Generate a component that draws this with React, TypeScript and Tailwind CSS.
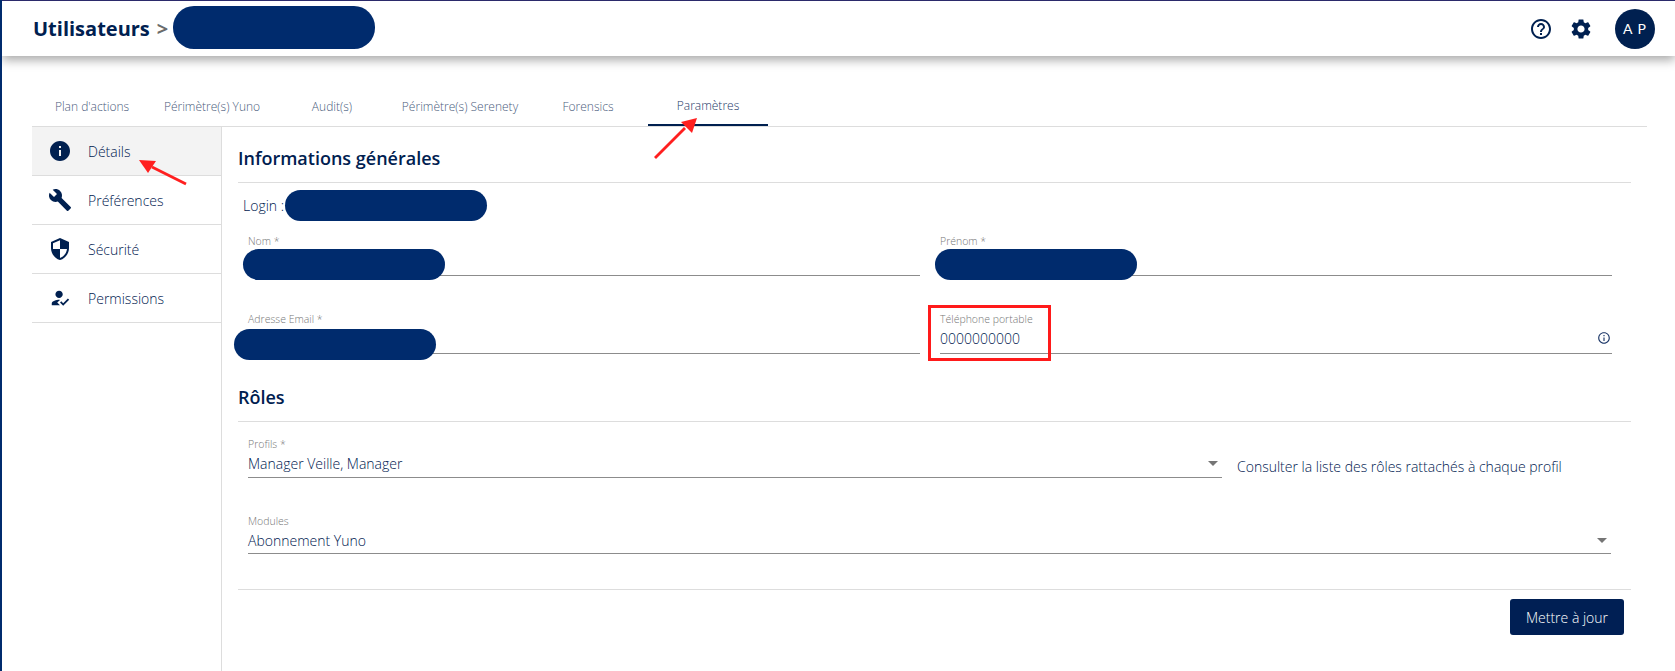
import React from "react";

function Mat({ d, className }: { d: string; className?: string }) {
  return (
    <svg viewBox="0 0 24 24" fill="currentColor" className={className}>
      <path d={d} />
    </svg>
  );
}

const icons = {
  info: "M12 2C6.48 2 2 6.48 2 12s4.48 10 10 10 10-4.48 10-10S17.52 2 12 2zm1 15h-2v-6h2v6zm0-8h-2V7h2v2z",
  build:
    "M22.7 19l-9.1-9.1c.9-2.3.4-5-1.5-6.9-2-2-5-2.4-7.4-1.3L9 6 6 9 1.6 4.7C.4 7.1.9 10.1 2.9 12.1c1.9 1.9 4.6 2.4 6.9 1.5l9.1 9.1c.4.4 1 .4 1.4 0l2.3-2.3c.5-.4.5-1.1.1-1.4z",
  security:
    "M12 1L3 5v6c0 5.55 3.84 10.74 9 12 5.16-1.26 9-6.45 9-12V5l-9-4zm0 10.99h7c-.53 4.12-3.28 7.79-7 8.94V12H5V6.3l7-3.11v8.8z",
  howTo:
    "M9 17l3-2.94c-.39-.04-.68-.06-1-.06-2.67 0-8 1.34-8 4v2h9l-3-3zm2-5c2.21 0 4-1.79 4-4s-1.79-4-4-4-4 1.79-4 4 1.79 4 4 4m4.47 8.5L12 17l1.4-1.41 2.07 2.08 5.13-5.17 1.4 1.41z",
  help:
    "M11 18h2v-2h-2v2zm1-16C6.48 2 2 6.48 2 12s4.48 10 10 10 10-4.48 10-10S17.52 2 12 2zm0 18c-4.41 0-8-3.59-8-8s3.59-8 8-8 8 3.59 8 8-3.59 8-8 8zm0-14c-2.21 0-4 1.79-4 4h2c0-1.1.9-2 2-2s2 .9 2 2c0 2-3 1.75-3 5h2c0-2.25 3-2.5 3-5 0-2.21-1.79-4-4-4z",
  gear:
    "M19.14 12.94c.04-.3.06-.61.06-.94 0-.32-.02-.64-.07-.94l2.03-1.58c.18-.14.23-.41.12-.61l-1.92-3.32c-.12-.22-.37-.29-.59-.22l-2.39.96c-.5-.38-1.03-.7-1.62-.94l-.36-2.54c-.04-.24-.24-.41-.48-.41h-3.84c-.24 0-.43.17-.47.41l-.36 2.54c-.59.24-1.13.57-1.62.94l-2.39-.96c-.22-.08-.47 0-.59.22L2.74 8.87c-.12.21-.08.47.12.61l2.03 1.58c-.05.3-.09.63-.09.94s.02.64.07.94l-2.03 1.58c-.18.14-.23.41-.12.61l1.92 3.32c.12.22.37.29.59.22l2.39-.96c.5.38 1.03.7 1.62.94l.36 2.54c.05.24.24.41.48.41h3.84c.24 0 .44-.17.47-.41l.36-2.54c.59-.24 1.13-.56 1.62-.94l2.39.96c.22.08.47 0 .59-.22l1.92-3.32c.12-.22.07-.47-.12-.61l-2.01-1.58zM12 15.6c-1.98 0-3.6-1.62-3.6-3.6s1.62-3.6 3.6-3.6 3.6 1.62 3.6 3.6-1.62 3.6-3.6 3.6z",
};

const tabs = [
  { label: "Plan d'actions", cls: "w-[120px]" },
  { label: "Périmètre(s) Yuno", cls: "w-[120px]" },
  { label: "Audit(s)", cls: "w-[120px]" },
  { label: "Périmètre(s) Serenety", cls: "w-[136px]" },
  { label: "Forensics", cls: "w-[120px]" },
];

const menu = [
  { label: "Détails", icon: icons.info, active: true, size: "w-[24px] h-[24px]" },
  { label: "Préférences", icon: icons.build, active: false, size: "w-[24px] h-[24px]" },
  { label: "Sécurité", icon: icons.security, active: false, size: "w-[24px] h-[24px]" },
  { label: "Permissions", icon: icons.howTo, active: false, size: "w-[22px] h-[22px]" },
];

// masked value, painted over the field like in the screenshot
function Pill({ className }: { className: string }) {
  return <div className={`absolute w-[202px] h-[31px] rounded-[16px] bg-[#002b6d] ${className}`} />;
}

function Field({
  label,
  value,
  className,
  children,
}: {
  label: string;
  value?: string;
  className: string;
  children?: React.ReactNode;
}) {
  return (
    <div className={`relative border-b border-[#8c8c8c] ${className}`}>
      <div className="text-[10.5px] leading-[12px] font-light text-[#777777]">{label}</div>
      {value && <div className="text-[14px] leading-[20px] mt-[4px] font-light text-[#002050]">{value}</div>}
      {children}
    </div>
  );
}

function Caret({ className }: { className: string }) {
  return (
    <div
      className={`absolute w-0 h-0 border-l-[5px] border-r-[5px] border-t-[5px] border-l-transparent border-r-transparent border-t-[#757575] ${className}`}
    />
  );
}

export default function App() {
  return (
    <div
      className="h-[671px] overflow-hidden bg-white border-l-2 border-[#002b6d] relative"
      style={{ fontFamily: '"Open Sans", sans-serif' }}
    >
      <header className="h-[56px] bg-white border-t border-[#2b2a6b] shadow-[0_4px_10px_rgba(0,0,0,0.35)] flex items-center pl-[31px] pr-[20px] relative z-10">
        <h1 className="text-[20px] font-bold text-[#002050] leading-[28px]">Utilisateurs</h1>
        <span className="text-[20px] font-bold text-[#6b6b6b] ml-[7px]">&gt;</span>
        <div className="ml-[5px] mb-[2px] w-[202px] h-[43px] rounded-[21px] bg-[#002b6d]" />
        <div className="ml-auto flex items-center text-[#002050]">
          <Mat d={icons.help} className="w-[24px] h-[24px]" />
          <Mat d={icons.gear} className="w-[24px] h-[24px] ml-[16px]" />
          <div
            className="ml-[22px] w-[40px] h-[40px] rounded-full bg-[#002050] text-white flex items-center justify-center text-[14px] tracking-[1px]"
            style={{ fontFamily: "Lato, sans-serif" }}
          >
            A P
          </div>
        </div>
      </header>

      <div className="ml-[30px] mr-[28px] mt-[23px] h-[48px] border-b border-[#dddddd] flex items-stretch relative">
        {tabs.map((t) => (
          <div key={t.label} className={`${t.cls} flex items-center justify-center text-[12px] font-light text-[#4a5c7c] whitespace-nowrap pt-[8px]`}>
            {t.label}
          </div>
        ))}
        <div className="w-[120px] flex items-center justify-center text-[12px] text-[#1c3768] font-light border-b-2 border-[#002050] pt-[9px]">
          Paramètres
        </div>
      </div>

      <div className="flex ml-[30px]">
        <aside className="w-[190px] h-[544px] border-r border-[#dddddd] shrink-0">
          {menu.map((m) => (
            <div
              key={m.label}
              className={`h-[49px] border-b border-[#dddddd] flex items-center ${m.active ? "bg-[#f3f3f3]" : ""}`}
            >
              <div className="w-[56px] flex items-center justify-center text-[#002050]">
                <Mat d={m.icon} className={m.size} />
              </div>
              <span className="text-[14px] font-light text-[#002050]">{m.label}</span>
            </div>
          ))}
        </aside>

        <main className="ml-[16px] w-[1393px]">
          <h2 className="mt-[19px] text-[18px] leading-[24px] font-semibold text-[#002050]">Informations générales</h2>
          <div className="mt-[12px] border-t border-[#dddddd]" />
          <div className="mt-[7px] ml-[5px] h-[31px] flex items-center text-[14px] font-light text-[#002050]">
            Login :
            <div className="ml-[1px] w-[202px] h-[31px] rounded-[16px] bg-[#002b6d]" />
          </div>

          <div className="mt-[14px] ml-[10px] flex gap-[20px]">
            <Field label="Nom *" className="w-[672px] h-[41px]">
              <Pill className="left-[-5px] top-[14px]" />
            </Field>
            <Field label="Prénom *" className="w-[672px] h-[41px]">
              <Pill className="left-[-5px] top-[14px]" />
            </Field>
          </div>

          <div className="mt-[37px] ml-[10px] flex gap-[20px]">
            <Field label="Adresse Email *" className="w-[672px] h-[41px]">
              <Pill className="left-[-14px] top-[16px]" />
            </Field>
            <Field label="Téléphone portable" value="0000000000" className="w-[672px] h-[41px]">
              <Mat d="M11 7h2v2h-2zm0 4h2v6h-2zm1-9C6.48 2 2 6.48 2 12s4.48 10 10 10 10-4.48 10-10S17.52 2 12 2zm0 18c-4.41 0-8-3.59-8-8s3.59-8 8-8 8 3.59 8 8-3.59 8-8 8z" className="absolute right-[1px] top-[18px] w-[14px] h-[14px] text-[#1c3768]" />
              <div className="absolute left-[-12px] top-[-8px] w-[123px] h-[56px] border-[3px] border-[#ff1a1a]" />
            </Field>
          </div>

          <h2 className="mt-[31px] text-[18px] leading-[24px] font-semibold text-[#002050]">Rôles</h2>
          <div className="mt-[12px] border-t border-[#dddddd]" />

          <div className="mt-[16px] ml-[10px] flex">
            <Field label="Profils *" value="Manager Veille, Manager" className="w-[974px] h-[40px]">
              <Caret className="right-[4px] top-[23px]" />
            </Field>
            <div className="ml-[15px] mt-[19px] text-[14px] leading-[20px] font-light text-[#002050] whitespace-nowrap">
              Consulter la liste des rôles rattachés à chaque profil
            </div>
          </div>

          <Field label="Modules" value="Abonnement Yuno" className="mt-[37px] ml-[10px] w-[1363px] h-[39px]">
            <Caret className="right-[4px] top-[23px]" />
          </Field>

          <div className="mt-[35px] border-t border-[#dddddd]" />
          <div className="mt-[9px] mr-[7px] flex justify-end">
            <button className="w-[114px] h-[36px] rounded-[3px] bg-[#001f54] text-white text-[14px] font-light">Mettre à jour</button>
          </div>
        </main>
      </div>

      {/* annotation arrows drawn on top of the capture */}
      <svg className="absolute left-[-2px] top-0 w-[1675px] h-[671px] pointer-events-none z-20" viewBox="0 0 1675 671" fill="none">
        <line x1="186" y1="184" x2="152" y2="167" stroke="#ff1f1f" strokeWidth="2.8" />
        <polygon points="139,160 156,161 148,173" fill="#ff1f1f" />
        <line x1="655" y1="158" x2="685" y2="128" stroke="#ff1f1f" strokeWidth="2.8" />
        <polygon points="697,118 681,122 692,133" fill="#ff1f1f" />
      </svg>
    </div>
  );
}
